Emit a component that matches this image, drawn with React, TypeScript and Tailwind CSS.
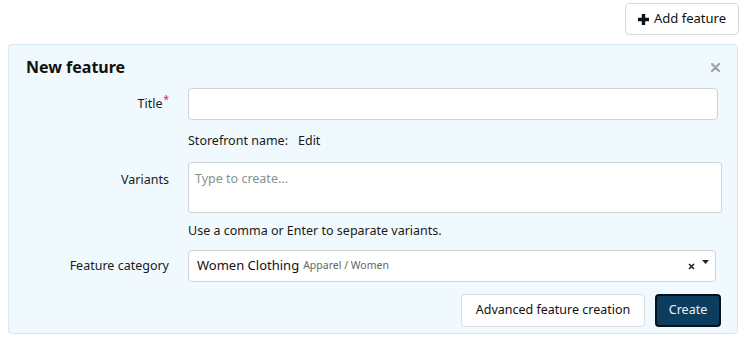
import React from 'react';

const font = { fontFamily: '"Noto Sans", "Open Sans", Arial, sans-serif' };

const Label = ({ children, required }: { children: React.ReactNode; required?: boolean }) => (
    <div className="w-[162px] shrink-0 text-right text-[12.5px] text-[#1a1a1a] pr-[2px] pt-[1px]">
        {children}
        {required && <span className="text-[#e0202a] text-[10px] align-top relative top-[-3px] ml-[1px]">*</span>}
    </div>
);

export default function App() {
    return (
        <div className="w-[744px] h-[340px] bg-white relative overflow-hidden" style={font}>
            <div className="flex justify-end pt-[3px] pr-[5px]">
                <button className="h-[32px] w-[114px] flex items-center justify-center gap-[5px] bg-white border border-[#d9d9d9] rounded-[4px] text-[13px] text-[#111]">
                    <svg width="11" height="11" viewBox="0 0 11 11"><path d="M3.8 0h3.4v3.8H11v3.4H7.2V11H3.8V7.2H0V3.8h3.8z" fill="#111" /></svg>
                    Add feature
                </button>
            </div>

            <div className="mt-[9px] ml-[8px] w-[730px] h-[290px] bg-[#f0f9fd] border border-[#d3e9f3] rounded-[4px] relative">
                <div className="flex items-center justify-between pl-[17px] pr-[17px] pt-[10px]">
                    <h2 className="text-[16px] font-bold text-[#111]">New feature</h2>
                    <svg width="9" height="9" viewBox="0 0 9 9"><path d="M1 1l7 7M8 1L1 8" stroke="#a0a4a8" strokeWidth="2.2" strokeLinecap="round" /></svg>
                </div>

                <div className="mt-[9px] flex items-center">
                    <Label required>Title</Label>
                    <input className="ml-[17px] w-[530px] h-[32px] bg-white border border-[#cfd4d8] rounded-[4px] outline-none" />
                </div>
                <div className="mt-[12px] ml-[179px] text-[12.5px] text-[#1a1a1a] flex gap-[10px]">
                    <span>Storefront name:</span>
                    <span>Edit</span>
                </div>

                <div className="mt-[11px] flex items-start">
                    <div className="pt-[8px]"><Label>Variants</Label></div>
                    <div className="ml-[17px] w-[534px] h-[51px] bg-white border border-[#cfd4d8] rounded-[3px] px-[6px] pt-[7px] text-[12.5px] text-[#8a8f93]">
                        Type to create...
                    </div>
                </div>
                <div className="mt-[9px] ml-[179px] text-[12.5px] text-[#1a1a1a]">
                    Use a comma or Enter to separate variants.
                </div>

                <div className="mt-[9px] flex items-center">
                    <Label>Feature category</Label>
                    <div className="ml-[17px] w-[528px] h-[32px] bg-white border border-[#cfd4d8] rounded-[4px] flex items-center pl-[8px] pr-[6px]">
                        <span className="text-[13px] text-[#111]">Women Clothing</span>
                        <span className="ml-[4px] text-[10.5px] text-[#666]">Apparel / Women</span>
                        <svg className="ml-auto mt-[2px]" width="7" height="7" viewBox="0 0 7 7"><path d="M1 1l5 5M6 1L1 6" stroke="#222" strokeWidth="1.6" /></svg>
                        <svg className="ml-[7px] mb-[8px]" width="7" height="4" viewBox="0 0 7 4"><path d="M0 0h7L3.5 4z" fill="#222" /></svg>
                    </div>
                </div>

                <div className="mt-[12px] flex justify-end gap-[10px] pr-[16px]">
                    <button className="h-[33px] w-[184px] bg-white border border-[#d9dde0] rounded-[4px] text-[12.5px] text-[#111]">
                        Advanced feature creation
                    </button>
                    <button className="h-[33px] w-[66px] bg-[#0c3d5e] border-2 border-[#03131e] rounded-[4px] text-[12.5px] text-[#e8f2f8]">
                        Create
                    </button>
                </div>
            </div>
        </div>
    );
}
